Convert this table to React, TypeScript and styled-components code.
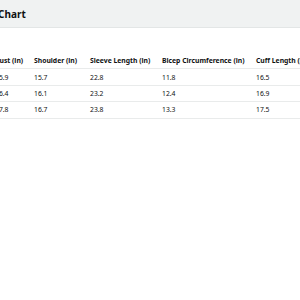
import styled, { createGlobalStyle } from 'styled-components';

const rows = [
  { bust: '35.9', shoulder: '15.7', sleeve: '22.8', bicep: '11.8', cuff: '16.5' },
  { bust: '36.4', shoulder: '16.1', sleeve: '23.2', bicep: '12.4', cuff: '16.9' },
  { bust: '37.8', shoulder: '16.7', sleeve: '23.8', bicep: '13.3', cuff: '17.5' },
];

const columns = ['Bust (in)', 'Shoulder (in)', 'Sleeve Length (in)', 'Bicep Circumference (in)', 'Cuff Length (in)'];

const GlobalStyle = createGlobalStyle`
  html, body {
    margin: 0;
    padding: 0;
    background: #fff;
  }
  body {
    font-family: "Noto Sans", "Open Sans", sans-serif;
    color: #0f1111;
  }
`;

const App = () => {
  return (
    <>
      <GlobalStyle />
      <Viewport>
        <Sheet>
          <TitleBar>
            <Title>Size Chart</Title>
          </TitleBar>
          <Table>
            <Row>
              {columns.map((c) => (
                <HeadCell key={c}>{c}</HeadCell>
              ))}
            </Row>
            {rows.map((r) => (
              <Row key={r.bust}>
                <Cell>{r.bust}</Cell>
                <Cell>{r.shoulder}</Cell>
                <Cell>{r.sleeve}</Cell>
                <Cell>{r.bicep}</Cell>
                <Cell>{r.cuff}</Cell>
              </Row>
            ))}
          </Table>
        </Sheet>
      </Viewport>
    </>
  );
};

const Viewport = styled.div`
  width: 300px;
  height: 300px;
  overflow: hidden;
  background: #fff;
`;

const Sheet = styled.div`
  width: 380px;
  margin-left: -40px;
`;

const TitleBar = styled.div`
  height: 27px;
  background: #f0f2f2;
  border-bottom: 1px solid #e3e6e6;
  display: flex;
  align-items: center;
  padding-left: 16px;
`;

const Title = styled.h2`
  margin: 0;
  font-size: 10px;
  font-weight: 700;
`;

const Table = styled.div`
  margin-top: 25px;
  padding-left: 27px;
`;

const Row = styled.div`
  box-sizing: border-box;
  display: grid;
  grid-template-columns: 39px 56px 72px 94px 1fr;
  height: 16.4px;
  border-bottom: 1px solid #e9ebeb;
  align-items: center;
`;

const HeadCell = styled.div`
  padding-left: 8px;
  font-size: 6.8px;
  font-weight: 700;
  white-space: nowrap;
`;

const Cell = styled.div`
  padding-left: 8px;
  font-size: 6.8px;
  white-space: nowrap;
`;

export default App;
